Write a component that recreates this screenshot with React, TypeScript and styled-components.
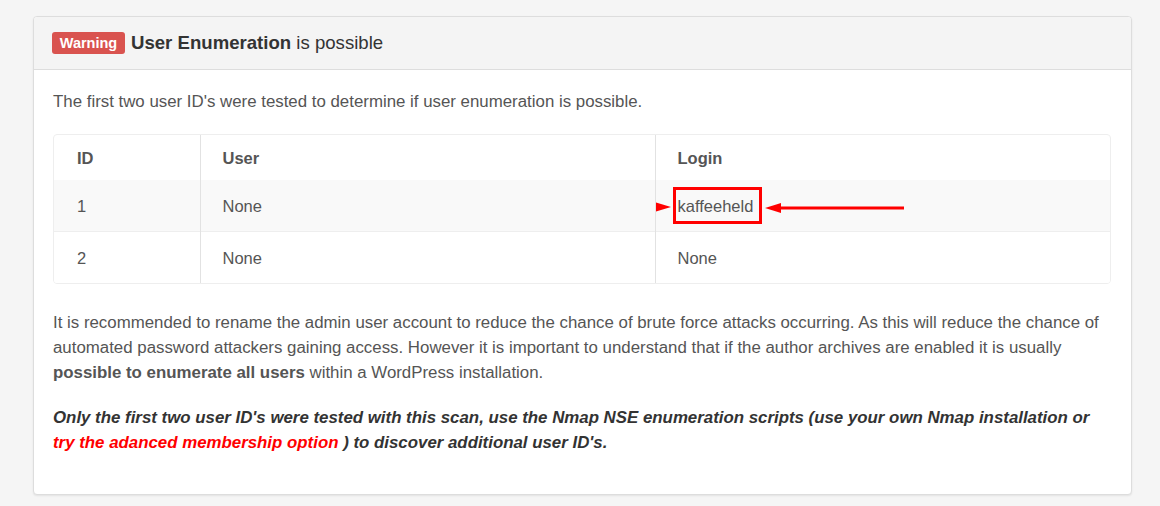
import { FC } from "react";
import styled, { createGlobalStyle } from "styled-components";

const GlobalStyle = createGlobalStyle`
	body {
		margin: 0;
		background: #f5f5f5;
		font-family: "Liberation Sans", Arial, sans-serif;
		color: #555;
	}
`;

interface IRow {
	id: string;
	user: string;
	login: string;
	marked?: boolean;
}

const rows: IRow[] = [
	{ id: "1", user: "None", login: "kaffeeheld", marked: true },
	{ id: "2", user: "None", login: "None" },
];

const App: FC = () => {
	return (
		<>
			<GlobalStyle />
			<Page>
				<Panel>
					<PanelHeader>
						<Badge>Warning</Badge>
						<Title>
							<strong>User Enumeration</strong> is possible
						</Title>
					</PanelHeader>
					<PanelBody>
						<Text>
							The first two user ID's were tested to determine if user
							enumeration is possible.
						</Text>
						<TableWrap>
							<Table>
								<colgroup>
									<Col $width={146} />
									<Col $width={455} />
									<Col />
								</colgroup>
								<thead>
									<tr>
										<Th>ID</Th>
										<Th>User</Th>
										<Th>Login</Th>
									</tr>
								</thead>
								<tbody>
									{rows.map((row, i) => (
										<Tr key={row.id} $striped={i % 2 === 0}>
											<Td>{row.id}</Td>
											<Td>{row.user}</Td>
											<Td>
												{row.login}
												{row.marked && <Annotation />}
											</Td>
										</Tr>
									))}
								</tbody>
							</Table>
						</TableWrap>
						<Text>
							It is recommended to rename the admin user account to reduce the
							chance of brute force attacks occurring. As this will reduce the
							chance of automated password attackers gaining access. However it
							is important to understand that if the author archives are enabled
							it is usually <b>possible to enumerate all users</b> within a
							WordPress installation.
						</Text>
						<Note>
							Only the first two user ID's were tested with this scan, use the
							Nmap NSE enumeration scripts (use your own Nmap installation or{" "}
							<RedLink href="#">try the adanced membership option</RedLink> ) to
							discover additional user ID's.
						</Note>
					</PanelBody>
				</Panel>
			</Page>
		</>
	);
};

// red box + arrows drawn over the login cell
const Annotation: FC = () => (
	<Overlay width="260" height="52" viewBox="0 0 260 52">
		<rect x="18.5" y="8.5" width="86" height="34" fill="none" stroke="#f00" strokeWidth="3" />
		<polygon points="0,22.5 15,27 0,31.5" fill="#f00" />
		<polygon points="109,28 125,23 125,33" fill="#f00" />
		<line x1="122" y1="28" x2="248" y2="28" stroke="#f00" strokeWidth="3" />
	</Overlay>
);

const Page = styled.div`
	padding: 16px 28px 13px 33px;
`;

const Panel = styled.div`
	background: #fff;
	border: 1px solid #ddd;
	border-radius: 4px;
	box-shadow: 0 1px 2px rgba(0, 0, 0, 0.08);
	overflow: hidden;
`;

const PanelHeader = styled.div`
	display: flex;
	align-items: center;
	gap: 6px;
	height: 52px;
	padding: 0 18px;
	background: #f4f4f4;
	border-bottom: 1px solid #ddd;
`;

const Badge = styled.span`
	display: inline-flex;
	align-items: center;
	justify-content: center;
	width: 73px;
	height: 22px;
	border-radius: 3px;
	background: #d9534f;
	color: #fff;
	font-size: 14.5px;
	font-weight: bold;
`;

const Title = styled.h3`
	margin: 0;
	font-size: 18.6px;
	font-weight: normal;
	color: #333;
`;

const PanelBody = styled.div`
	padding: 19px 20px 19px 19px;
`;

const Text = styled.p`
	margin: 0 0 20px;
	font-size: 16.85px;
	line-height: 25px;
`;

const Note = styled(Text)`
	font-weight: bold;
	font-style: italic;
	color: #333;
`;

const RedLink = styled.a`
	color: #f00;
	text-decoration: none;
`;

const TableWrap = styled.div`
	border: 1px solid #eee;
	border-radius: 4px;
	margin: 0 0 26px;
	overflow: hidden;
`;

const Table = styled.table`
	width: 100%;
	table-layout: fixed;
	border-collapse: collapse;
	font-size: 16.5px;
	line-height: 20px;
`;

const Col = styled.col<{ $width?: number }>`
	width: ${(p) => (p.$width ? `${p.$width}px` : "auto")};
`;

const Th = styled.th`
	height: 45px;
	padding: 0 22px;
	text-align: left;
	font-weight: bold;
	color: #555;
	border-left: 1px solid #e2e2e2;
	&:first-child {
		border-left: none;
		padding-left: 23px;
	}
`;

const Tr = styled.tr<{ $striped: boolean }>`
	background: ${(p) => (p.$striped ? "#f9f9f9" : "#fff")};
	& + & {
		border-top: 1px solid #eee;
	}
`;

const Td = styled.td`
	position: relative;
	height: 51px;
	padding: 0 22px;
	color: #555;
	border-left: 1px solid #e2e2e2;
	&:first-child {
		border-left: none;
		padding-left: 23px;
	}
`;

const Overlay = styled.svg`
	position: absolute;
	left: 0;
	top: 0;
	pointer-events: none;
`;

export default App;
